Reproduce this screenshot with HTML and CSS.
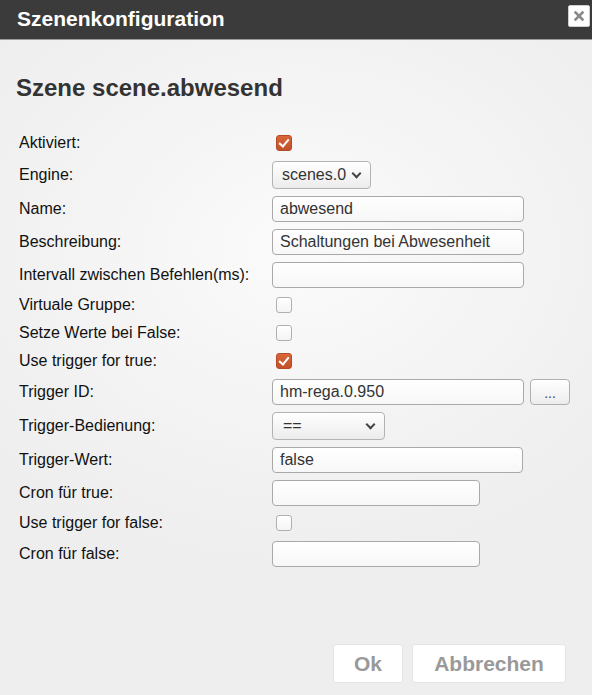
FILE: index.html
```html
<!DOCTYPE html>
<html lang="de">
<head>
<meta charset="utf-8">
<title>Szenenkonfiguration</title>
<link rel="stylesheet" href="styles.css">
</head>
<body>
<div class="dialog">
  <div class="titlebar">
    <span class="title">Szenenkonfiguration</span>
    <span class="close"><svg width="10" height="10" viewBox="0 0 10 10"><path d="M1.5 1.5 L8.5 8.5 M8.5 1.5 L1.5 8.5" stroke="#8a8a8a" stroke-width="2.6" stroke-linecap="square"/></svg></span>
  </div>
  <div class="content">
    <h2 class="heading">Szene scene.abwesend</h2>
    <div class="form">
      <div class="row cb"><span class="label">Aktiviert:</span><span class="check on"></span></div>
      <div class="row sel"><span class="label">Engine:</span><span class="select engine">scenes.0<i class="chev"></i></span></div>
      <div class="row inp"><span class="label">Name:</span><span class="input">abwesend</span></div>
      <div class="row inp"><span class="label">Beschreibung:</span><span class="input">Schaltungen bei Abwesenheit</span></div>
      <div class="row inp"><span class="label">Intervall zwischen Befehlen(ms):</span><span class="input"></span></div>
      <div class="row cb"><span class="label">Virtuale Gruppe:</span><span class="check"></span></div>
      <div class="row cb"><span class="label">Setze Werte bei False:</span><span class="check"></span></div>
      <div class="row cb"><span class="label">Use trigger for true:</span><span class="check on"></span></div>
      <div class="row inp"><span class="label">Trigger ID:</span><span class="input">hm-rega.0.950</span><span class="dots">...</span></div>
      <div class="row sel"><span class="label">Trigger-Bedienung:</span><span class="select cond">==<i class="chev"></i></span></div>
      <div class="row inp"><span class="label">Trigger-Wert:</span><span class="input wert">false</span></div>
      <div class="row inp"><span class="label">Cron für true:</span><span class="input short"></span></div>
      <div class="row cb"><span class="label">Use trigger for false:</span><span class="check"></span></div>
      <div class="row inp"><span class="label">Cron für false:</span><span class="input short"></span></div>
    </div>
  </div>
  <div class="buttons">
    <span class="btn ok">Ok</span>
    <span class="btn cancel">Abbrechen</span>
  </div>
</div>
</body>
</html>
```
FILE: styles.css
```css
html, body {
  margin: 0;
  padding: 0;
}
body {
  font-family: "Liberation Sans", Arial, sans-serif;
  width: 592px;
  height: 695px;
  overflow: hidden;
}
.dialog {
  height: 695px;
  display: flex;
  flex-direction: column;
  background: radial-gradient(ellipse 420px 330px at 300px 250px, #fbfbfb 0%, #f1f1f1 70%, #eeeeee 100%);
}
.titlebar {
  height: 39px;
  background: #3b3b3b;
  border-bottom: 1px solid #9a9a9a;
  display: flex;
  align-items: center;
  justify-content: space-between;
  padding: 0 2px 0 17px;
}
.title {
  color: #ffffff;
  font-weight: bold;
  font-size: 21px;
  margin-top: -2px;
}
.close {
  width: 20px;
  height: 20px;
  background: #ffffff;
  border: 1px solid #cfcfcf;
  border-radius: 2px;
  display: flex;
  align-items: center;
  justify-content: center;
  margin-top: -7px;
}
.content {
  flex: 1;
  padding: 0 16px;
}
.heading {
  margin: 34px 0 27px 0;
  font-size: 24px;
  line-height: 28px;
  font-weight: bold;
  color: #333333;
}
.form {
  display: flex;
  flex-direction: column;
}
.row {
  display: flex;
  align-items: center;
  font-size: 16px;
  color: #111111;
}
.row.cb { height: 28px; }
.row.inp { height: 33px; }
.row.sel { height: 35px; }
.label {
  width: 253px;
  padding-left: 3px;
  flex: none;
}
.check {
  width: 14px;
  height: 14px;
  margin-left: 4px;
  border: 1px solid #b0b0b0;
  border-radius: 3px;
  background: linear-gradient(#ffffff, #f4f4f4);
  position: relative;
}
.check.on {
  background: linear-gradient(#d9673a, #c2512a);
  border-color: #b24a25;
}
.check.on::after {
  content: "";
  position: absolute;
  left: 4px;
  top: 1px;
  width: 4px;
  height: 8px;
  border: solid #ffffff;
  border-width: 0 2.5px 2.5px 0;
  transform: rotate(40deg);
}
.input {
  box-sizing: border-box;
  width: 252px;
  height: 26px;
  border: 1px solid #a9a9a9;
  border-radius: 4px;
  background: linear-gradient(#ffffff, #f7f7f7);
  padding: 0 7px;
  display: flex;
  align-items: center;
  color: #333333;
  font-size: 16px;
}
.input.wert { width: 251px; }
.input.short { width: 208px; }
.dots {
  box-sizing: border-box;
  width: 40px;
  height: 26px;
  margin-left: 6px;
  border: 1px solid #b0b0b0;
  border-radius: 4px;
  background: linear-gradient(#ffffff, #ececec);
  display: flex;
  align-items: center;
  justify-content: center;
  color: #444444;
  font-size: 14px;
  padding-top: 2px;
}
.select {
  box-sizing: border-box;
  height: 28px;
  border: 1px solid #b3b3b3;
  border-radius: 4px;
  background: linear-gradient(#ffffff, #ececec);
  display: flex;
  align-items: center;
  justify-content: space-between;
  padding: 0 9px 0 9px;
  color: #333333;
  font-size: 16px;
}
.select.engine { width: 99px; }
.select.cond { width: 113px; padding-left: 10px; }
.chev {
  width: 5px;
  height: 5px;
  border: solid #444444;
  border-width: 0 2px 2px 0;
  transform: rotate(45deg);
  margin-top: -3px;
  margin-right: 1px;
}
.buttons {
  display: flex;
  justify-content: flex-end;
  gap: 9px;
  padding: 0 26px 12px 0;
}
.btn {
  box-sizing: border-box;
  height: 39px;
  background: #ffffff;
  border: 1px solid #e4e4e4;
  border-radius: 3px;
  display: flex;
  align-items: center;
  justify-content: center;
  font-weight: bold;
  font-size: 21px;
  color: #999999;
}
.btn.ok { width: 70px; }
.btn.cancel { width: 154px; }
```
